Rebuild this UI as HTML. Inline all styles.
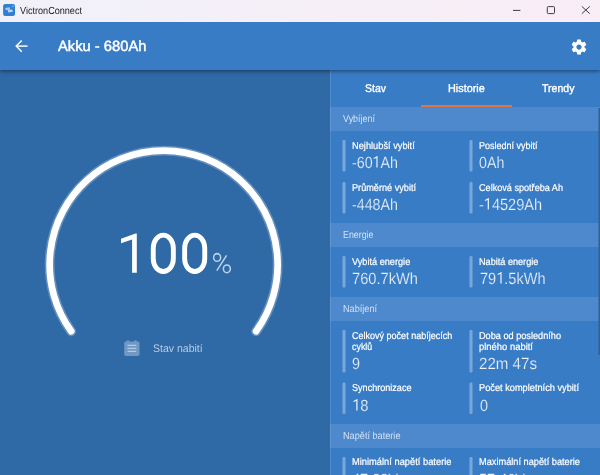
<!DOCTYPE html>
<html><head><meta charset="utf-8">
<style>
*{box-sizing:border-box;margin:0;padding:0}
html,body{text-rendering:geometricPrecision;width:600px;height:475px;overflow:hidden;background:#2f69a6;font-family:"Liberation Sans",sans-serif;}
body{position:relative}
.tx{position:absolute;transform-origin:0 0;display:inline-block;white-space:nowrap;line-height:normal;z-index:10}
#tb{z-index:7;position:absolute;left:0;top:0;width:600px;height:22px;background:linear-gradient(90deg,#f1f1f9,#f9edf6);}
#hdr{position:absolute;left:0;top:22px;width:600px;height:48px;background:#387cc6;box-shadow:0 1px 4px rgba(0,0,0,.5);z-index:5}
#left{position:absolute;left:0;top:70px;width:330px;height:405px;background:#2f69a6;}
#right{position:absolute;left:330px;top:70px;width:270px;height:405px;background:#387cc6;}
.ul{position:absolute;left:421.2px;top:105px;width:90.8px;height:2px;background:#e2733f;z-index:6}
.shb{position:absolute;left:330px;width:270px;height:24px;background:#4d89cc}
.bar{position:absolute;width:2.5px;background:#8db3df;border-radius:1.2px}
.sb{position:absolute;left:598px;top:108px;width:2px;height:247px;background:linear-gradient(90deg,rgba(46,97,153,.5) 50%,#2e6199 50%);z-index:6}
.ttl{color:#1a1a1a}
.hd{color:#fff;-webkit-text-stroke:0.45px #fff}
.tab{color:#fff;-webkit-text-stroke:0.35px #fff}
.sh{color:#d3e2f4}
.lb{color:#fff;-webkit-text-stroke:0.2px #fff}
.vl{color:#eef4fb;-webkit-text-stroke:0.22px #387cc6}
.sn{color:#b5cce7}
svg{position:absolute;z-index:10;overflow:visible}
svg.one{position:static;display:inline-block;width:0.556em;height:0.716em;vertical-align:baseline;fill:#eef4fb}
.big{color:#fff}
.pct{color:#c4d7ee}
</style></head><body>
<div id="tb"></div>
<div id="hdr"></div>
<div id="left"></div>
<div id="right"></div>
<div class="ul"></div>
<div style="position:absolute;left:330px;top:70px;width:1px;height:405px;background:rgba(255,255,255,0.13);z-index:4"></div>
<div class="shb" style="top:107px"></div>
<div class="shb" style="top:223px"></div>
<div class="shb" style="top:297px"></div>
<div class="shb" style="top:424px"></div>
<div class="sb"></div>
<!-- app icon -->
<svg style="left:0;top:0" width="22" height="22" viewBox="0 0 22 22">
<rect x="3.1" y="3.9" width="11.9" height="12" rx="2" fill="#2f80d2"/>
<path d="M5.1 8.1 L9.7 7.3 L10.3 9.7 L5.8 10.1 Z" fill="#a9caee"/><path d="M7.7 10.1 L12.3 9.4 L12.9 11.8 L8.3 12.4 Z" fill="#b9d4f1"/>
<circle cx="12.9" cy="6.3" r="0.7" fill="none" stroke="#a9cbee" stroke-width="0.5"/>
</svg>
<!-- window controls -->
<svg style="left:500px;top:0" width="100" height="22" viewBox="0 0 100 22" fill="none" stroke="#2a2a2a" stroke-width="0.9">
<path d="M13 10.4 H20.4"/>
<rect x="47.3" y="6.6" width="7.2" height="7" rx="1"/>
<path d="M81.8 6.4 L89.8 13.7 M89.8 6.4 L81.8 13.7"/>
</svg>
<!-- back arrow -->
<svg style="left:0;top:22px" width="60" height="48" viewBox="0 22 60 48" fill="none" stroke="#fff" stroke-width="1.45" stroke-linecap="butt" stroke-linejoin="miter">
<path d="M27.55 46.1 H16.4"/>
<path d="M21.75 40.55 L16.2 46.1 L21.75 51.65"/>
</svg>
<!-- gear -->
<svg style="left:570.05px;top:37.5px" width="18" height="18" viewBox="0 0 24 24"><path fill="#fff" d="M19.43 12.98c.04-.32.07-.64.07-.98s-.03-.66-.07-.98l2.11-1.65c.19-.15.24-.42.12-.64l-2-3.46c-.12-.22-.39-.3-.61-.22l-2.49 1c-.52-.4-1.08-.73-1.69-.98l-.38-2.65C14.46 2.18 14.25 2 14 2h-4c-.25 0-.46.18-.49.42l-.38 2.65c-.61.25-1.17.59-1.69.98l-2.49-1c-.23-.09-.49 0-.61.22l-2 3.46c-.13.22-.07.49.12.64l2.11 1.65c-.04.32-.07.65-.07.98s.03.66.07.98l-2.11 1.65c-.19.15-.24.42-.12.64l2 3.46c.12.22.39.3.61.22l2.49-1c.52.4 1.08.73 1.69.98l.38 2.65c.03.24.24.42.49.42h4c.25 0 .46-.18.49-.42l.38-2.65c.61-.25 1.17-.59 1.69-.98l2.49 1c.23.09.49 0 .61-.22l2-3.46c.12-.22.07-.49-.12-.64l-2.11-1.65zM12 15.5c-1.93 0-3.5-1.57-3.5-3.5s1.57-3.5 3.5-3.5 3.5 1.57 3.5 3.5-1.57 3.5-3.5 3.5z"/></svg>
<!-- gauge -->
<svg style="left:0;top:70px" width="330" height="405" viewBox="0 70 330 405">
<defs><filter id="gl" x="-5%" y="-5%" width="110%" height="110%"><feGaussianBlur stdDeviation="0.5"/></filter></defs>
<g filter="url(#gl)" fill="none" stroke="#fff" stroke-linecap="round">
<path d="M71.19 331.29 A114 114 0 1 1 256.11 331.29" stroke-width="9.8" stroke-opacity="0.25"/>
<path d="M71.19 331.29 A114 114 0 1 1 256.11 331.29" stroke-width="6.7"/>
</g>
<!-- battery icon -->
<rect x="124.2" y="341.6" width="15.3" height="14.3" rx="1.6" fill="#7197c4"/>
<rect x="126.7" y="340.3" width="2.5" height="2" fill="#7197c4"/>
<rect x="134.2" y="340.3" width="2.5" height="2" fill="#7197c4"/>
<path d="M127.5 345.4 H136.3 M127.5 348.4 H136.3 M127.5 351.4 H136.3" stroke="#b3c9e4" stroke-width="1.1" fill="none"/>
</svg>
<svg style="left:0;top:0" width="600" height="475" viewBox="0 0 600 475">
<rect x="342.5" y="140" width="3" height="31.5" rx="1.3" fill="#7aa7d9"/>
<rect x="469.5" y="140" width="3" height="31.5" rx="1.3" fill="#7aa7d9"/>
<rect x="342.5" y="182" width="3" height="31.5" rx="1.3" fill="#7aa7d9"/>
<rect x="469.5" y="182" width="3" height="31.5" rx="1.3" fill="#7aa7d9"/>
<rect x="342.5" y="256" width="3" height="31.5" rx="1.3" fill="#7aa7d9"/>
<rect x="469.5" y="256" width="3" height="31.5" rx="1.3" fill="#7aa7d9"/>
<rect x="342.5" y="330" width="3" height="42.5" rx="1.3" fill="#7aa7d9"/>
<rect x="469.5" y="330" width="3" height="42.5" rx="1.3" fill="#7aa7d9"/>
<rect x="342.5" y="382.5" width="3" height="31.5" rx="1.3" fill="#7aa7d9"/>
<rect x="469.5" y="382.5" width="3" height="31.5" rx="1.3" fill="#7aa7d9"/>
<rect x="342.5" y="457" width="3" height="31.5" rx="1.3" fill="#7aa7d9"/>
<rect x="469.5" y="457" width="3" height="31.5" rx="1.3" fill="#7aa7d9"/>
</svg>
<!-- 100% -->
<svg style="left:0;top:0" width="330" height="475" viewBox="0 0 330 475">
<path d="M136.8 233.5 V272.8 H132.1 V239.4 L121 243.2 V238.7 L135.6 233.5 Z" fill="#fff"/>
<rect x="153.25" y="235.1" width="20.1" height="36.4" rx="10.05" ry="13" fill="none" stroke="#fff" stroke-width="4.9"/>
<rect x="184.65" y="235.1" width="20.1" height="36.4" rx="10.05" ry="13" fill="none" stroke="#fff" stroke-width="4.9"/>
<g fill="none" stroke="#bcd2eb" stroke-width="1.55">
<ellipse cx="217.1" cy="257.45" rx="3.5" ry="3.85"/>
<ellipse cx="226.85" cy="268.8" rx="3.5" ry="3.85"/>
<path d="M226.6 255.4 L216.8 270.6"/>
</g>
</svg>

<span id="t0" class="tx ttl" style="left:19.70px;top:6.00px;font-size:10.2px;transform:scaleX(0.8925);">VictronConnect</span>
<span id="t1" class="tx hd" style="left:58.25px;top:39.00px;font-size:14.9px;transform:scaleX(0.9887);">Akku - 680Ah</span>
<span id="t2" class="tx tab" style="left:365.00px;top:83.00px;font-size:11.2px;transform:scaleX(0.9379);">Stav</span>
<span id="t3" class="tx tab" style="left:448.30px;top:83.00px;font-size:11.2px;transform:scaleX(0.9678);">Historie</span>
<span id="t4" class="tx tab" style="left:541.50px;top:83.00px;font-size:11.2px;transform:scaleX(0.9446);">Trendy</span>
<span id="t5" class="tx sh" style="left:343.00px;top:114.00px;font-size:10.2px;transform:scaleX(0.8782);">Vybíjení</span>
<span id="t6" class="tx sh" style="left:342.70px;top:230.00px;font-size:10.2px;transform:scaleX(0.8683);">Energie</span>
<span id="t7" class="tx sh" style="left:342.70px;top:304.00px;font-size:10.2px;transform:scaleX(0.8958);">Nabíjení</span>
<span id="t8" class="tx sh" style="left:342.70px;top:431.00px;font-size:10.2px;transform:scaleX(0.8984);">Napětí baterie</span>
<span id="t9" class="tx lb" style="left:351.90px;top:141.00px;font-size:10px;transform:scaleX(0.9253);">Nejhlubší vybití</span>
<span id="t10" class="tx lb" style="left:351.90px;top:183.00px;font-size:10px;transform:scaleX(0.9139);">Průměrné vybití</span>
<span id="t11" class="tx lb" style="left:351.90px;top:257.00px;font-size:10px;transform:scaleX(0.9164);">Vybitá energie</span>
<span id="t12" class="tx lb" style="left:351.90px;top:331.00px;font-size:10px;transform:scaleX(0.9018);">Celkový počet nabíjecích</span>
<span id="t13" class="tx lb" style="left:351.90px;top:342.00px;font-size:10px;transform:scaleX(0.8883);">cyklů</span>
<span id="t14" class="tx lb" style="left:351.90px;top:383.00px;font-size:10px;transform:scaleX(0.9071);">Synchronizace</span>
<span id="t15" class="tx lb" style="left:351.90px;top:457.00px;font-size:10px;transform:scaleX(0.9322);">Minimální napětí baterie</span>
<span id="t16" class="tx lb" style="left:479.20px;top:141.00px;font-size:10px;transform:scaleX(0.9009);">Poslední vybití</span>
<span id="t17" class="tx lb" style="left:479.20px;top:183.00px;font-size:10px;transform:scaleX(0.9103);">Celková spotřeba Ah</span>
<span id="t18" class="tx lb" style="left:479.20px;top:257.00px;font-size:10px;transform:scaleX(0.9117);">Nabitá energie</span>
<span id="t19" class="tx lb" style="left:479.20px;top:331.00px;font-size:10px;transform:scaleX(0.9159);">Doba od posledního</span>
<span id="t20" class="tx lb" style="left:479.20px;top:342.00px;font-size:10px;transform:scaleX(0.9427);">plného nabití</span>
<span id="t21" class="tx lb" style="left:479.20px;top:383.00px;font-size:10px;transform:scaleX(0.9226);">Počet kompletních vybití</span>
<span id="t22" class="tx lb" style="left:479.20px;top:457.00px;font-size:10px;transform:scaleX(0.9222);">Maximální napětí baterie</span>
<span id="t23" class="tx vl" style="left:351.90px;top:154.00px;font-size:16.2px;transform:scaleX(0.8809);">-60<svg class="one" viewBox="0 -716 556 716"><path d="M372 -716 V0 H290 V-600 L95 -528 V-600 L352 -716 Z"/></svg>Ah</span>
<span id="t24" class="tx vl" style="left:351.90px;top:196.00px;font-size:16.2px;transform:scaleX(0.8812);">-448Ah</span>
<span id="t25" class="tx vl" style="left:352.20px;top:270.00px;font-size:16.2px;transform:scaleX(0.9055);">760.7kWh</span>
<span id="t26" class="tx vl" style="left:351.90px;top:355.00px;font-size:16.2px;transform:scaleX(0.8873);">9</span>
<span id="t27" class="tx vl" style="left:352.20px;top:397.00px;font-size:16.2px;transform:scaleX(0.9159);"><svg class="one" viewBox="0 -716 556 716"><path d="M372 -716 V0 H290 V-600 L95 -528 V-600 L352 -716 Z"/></svg>8</span>
<span id="t28" class="tx vl" style="left:351.90px;top:471.00px;font-size:16.2px;transform:scaleX(0.8965);">47.23V</span>
<span id="t29" class="tx vl" style="left:479.20px;top:154.00px;font-size:16.2px;transform:scaleX(0.8781);">0Ah</span>
<span id="t30" class="tx vl" style="left:479.20px;top:196.00px;font-size:16.2px;transform:scaleX(0.8974);">-<svg class="one" viewBox="0 -716 556 716"><path d="M372 -716 V0 H290 V-600 L95 -528 V-600 L352 -716 Z"/></svg>4529Ah</span>
<span id="t31" class="tx vl" style="left:479.50px;top:270.00px;font-size:16.2px;transform:scaleX(0.8984);">79<svg class="one" viewBox="0 -716 556 716"><path d="M372 -716 V0 H290 V-600 L95 -528 V-600 L352 -716 Z"/></svg>.5kWh</span>
<span id="t32" class="tx vl" style="left:479.20px;top:355.00px;font-size:16.2px;transform:scaleX(0.9341);">22m 47s</span>
<span id="t33" class="tx vl" style="left:479.50px;top:397.00px;font-size:16.2px;transform:scaleX(0.8873);">0</span>
<span id="t34" class="tx vl" style="left:479.20px;top:471.00px;font-size:16.2px;transform:scaleX(0.8965);">57.46V</span>
<span id="t35" class="tx sn" style="left:153.30px;top:343.00px;font-size:11px;transform:scaleX(0.9561);">Stav nabití</span>
</body></html>
